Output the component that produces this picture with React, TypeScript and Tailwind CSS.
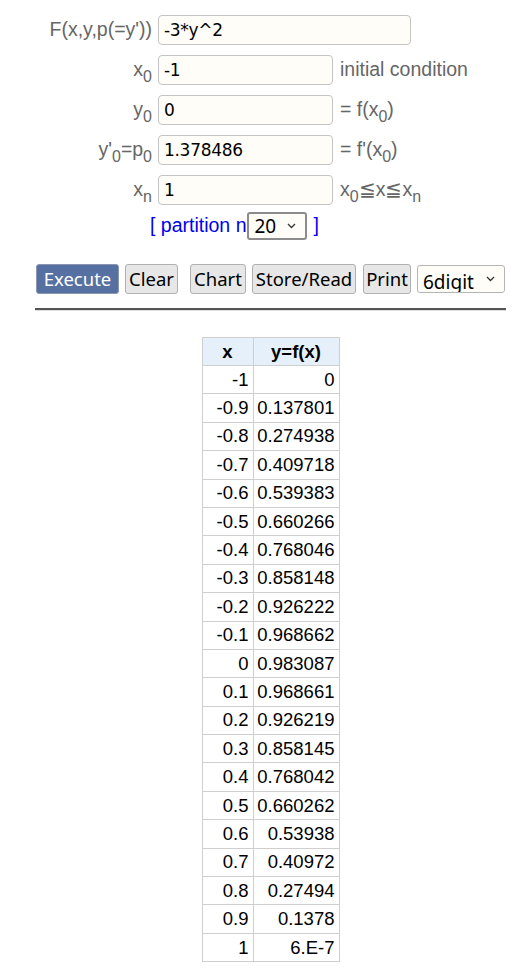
import React from "react";

const rows: [string, string][] = [
  ["-1", "0"],
  ["-0.9", "0.137801"],
  ["-0.8", "0.274938"],
  ["-0.7", "0.409718"],
  ["-0.6", "0.539383"],
  ["-0.5", "0.660266"],
  ["-0.4", "0.768046"],
  ["-0.3", "0.858148"],
  ["-0.2", "0.926222"],
  ["-0.1", "0.968662"],
  ["0", "0.983087"],
  ["0.1", "0.968661"],
  ["0.2", "0.926219"],
  ["0.3", "0.858145"],
  ["0.4", "0.768042"],
  ["0.5", "0.660262"],
  ["0.6", "0.53938"],
  ["0.7", "0.40972"],
  ["0.8", "0.27494"],
  ["0.9", "0.1378"],
  ["1", "6.E-7"],
];

const inputCls =
  "h-[30px] rounded-[4px] border border-[#c4c4c4] bg-[#fffdf7] px-[5px] text-[17px] text-black outline-none [font-family:'DejaVu_Sans',sans-serif] tracking-[-0.3px]";

function Sub({ c }: { c: string }) {
  return <sub className="text-[0.82em] align-[-0.12em]">{c}</sub>;
}

function Row({ label, children }: { label: React.ReactNode; children: React.ReactNode }) {
  return (
    <div className="flex items-center h-[40px]">
      <div className="w-[123px] text-right pr-[6px] text-[19.5px] text-[#666]">{label}</div>
      {children}
    </div>
  );
}

function Btn({ children, primary, w }: { children: React.ReactNode; primary?: boolean; w: string }) {
  return (
    <button
      className={
        "h-[30px] rounded-[3px] border text-[18.5px] leading-none [font-family:'Noto_Sans',sans-serif] " +
        w +
        (primary
          ? " bg-[#5670a1] border-[#8a96b0] text-white"
          : " bg-[#e7e7e7] border-[#b0b0b0] text-black")
      }
    >
      {children}
    </button>
  );
}

export default function App() {
  return (
    <div className="w-[524px] min-h-[972px] bg-white [font-family:'Liberation_Sans',Arial,sans-serif]">
      <div className="pt-[10px] pl-[35px]">
        <Row label={<span>F(x,y,p(=y'))</span>}>
          <input className={inputCls + " w-[253px]"} defaultValue="-3*y^2" />
        </Row>
        <Row label={<span>x<Sub c="0" /></span>}>
          <input className={inputCls + " w-[175px]"} defaultValue="-1" />
          <span className="ml-[7px] text-[19.5px] text-[#666]">initial condition</span>
        </Row>
        <Row label={<span>y<Sub c="0" /></span>}>
          <input className={inputCls + " w-[175px]"} defaultValue="0" />
          <span className="ml-[7px] text-[19.5px] text-[#666]">
            = f(x<Sub c="0" />)
          </span>
        </Row>
        <Row label={<span>y'<Sub c="0" />=p<Sub c="0" /></span>}>
          <input className={inputCls + " w-[175px]"} defaultValue="1.378486" />
          <span className="ml-[7px] text-[19.5px] text-[#666]">
            = f'(x<Sub c="0" />)
          </span>
        </Row>
        <Row label={<span>x<Sub c="n" /></span>}>
          <input className={inputCls + " w-[175px]"} defaultValue="1" />
          <span className="ml-[7px] text-[19.5px] text-[#666]">
            x<Sub c="0" />≦x≦x<Sub c="n" />
          </span>
        </Row>
        <div className="flex items-center h-[28px] mt-[2px] pl-[115px] text-[19.5px] text-[#0000ee]">
          <span>[ partition n</span>
          <div className="relative ml-[1px] h-[28px] w-[60px] rounded-[3px] border-2 border-[#8c8c8c] bg-[#fffdf7]">
            <span className="absolute left-[5px] top-[1px] text-[19px] text-black [font-family:'Noto_Sans',sans-serif] leading-[23px]">20</span>
            <svg className="absolute right-[9px] top-[9px]" width="9" height="6" viewBox="0 0 9 6">
              <path d="M1 1l3.5 3.5L8 1" fill="none" stroke="#333" strokeWidth="1.3" />
            </svg>
          </div>
          <span className="ml-[6px]">]</span>
        </div>
      </div>

      <div className="flex items-center mt-[24px] pl-[36px]">
        <Btn primary w="w-[83px]">Execute</Btn>
        <div className="w-[6px]" />
        <Btn w="w-[53px]">Clear</Btn>
        <div className="w-[12px]" />
        <Btn w="w-[56px]">Chart</Btn>
        <div className="w-[6px]" />
        <Btn w="w-[104px]">Store/Read</Btn>
        <div className="w-[7px]" />
        <Btn w="w-[48px]">Print</Btn>
        <div className="w-[6px]" />
        <div className="relative h-[28px] w-[88px] rounded-[3px] border border-[#b5b5b5] bg-[#fffdf7] overflow-hidden">
          <span className="absolute left-[5px] top-[2px] text-[19px] text-black [font-family:'Noto_Sans',sans-serif] leading-[28px]">6digit</span>
          <svg className="absolute right-[9px] top-[10px]" width="9" height="6" viewBox="0 0 9 6">
            <path d="M1 1l3.5 3.5L8 1" fill="none" stroke="#333" strokeWidth="1.3" />
          </svg>
        </div>
      </div>

      <div className="mx-[35px] mt-[14px] w-[471px] border-t-2 border-[#555] border-b border-b-[#ddd]" />

      <div className="flex justify-center mt-[26px] pl-[17px]">
        <table className="border-collapse text-[18.5px] leading-[20px] text-black">
          <thead>
            <tr className="h-[28px]">
              <th className="w-[51px] p-0 border border-[#cfcfcf] bg-[#e6f0fa] text-center font-bold">x</th>
              <th className="w-[86px] p-0 border border-[#cfcfcf] bg-[#e6f0fa] text-center font-bold">y=f(x)</th>
            </tr>
          </thead>
          <tbody>
            {rows.map(([x, y]) => (
              <tr key={x} className="h-[28.4px]">
                <td className="border border-[#cfcfcf] text-right py-0 pr-[4px] pl-[1px]">{x}</td>
                <td className="border border-[#cfcfcf] text-right py-0 pr-[4px] pl-[1px]">{y}</td>
              </tr>
            ))}
          </tbody>
        </table>
      </div>
    </div>
  );
}
